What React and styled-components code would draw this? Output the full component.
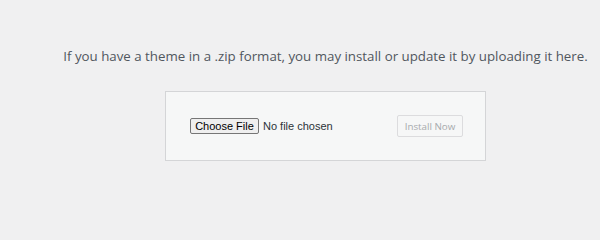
import styled, { createGlobalStyle } from 'styled-components';

const GlobalStyle = createGlobalStyle`
    html, body {
        margin: 0;
        padding: 0;
        background: #f0f0f1;
    }
`

const Page = styled.div`
    height: 223px;
    box-sizing: border-box;
    padding: 46px 0 0 51px;
    display: flex;
    flex-direction: column;
    align-items: center;
    font-family: 'Open Sans', sans-serif;
`

const Help = styled.p`
    margin: 0;
    font-size: 13.3px;
    line-height: 20px;
    color: #50575e;
    text-align: center;
    white-space: nowrap;
`

const UploadForm = styled.form`
    margin-top: 25px;
    width: 321px;
    height: 70px;
    box-sizing: border-box;
    background: #f6f7f7;
    border: 1px solid #d4d5d7;
    display: flex;
    align-items: center;
    justify-content: space-between;
    padding: 0 22px 0 24px;
`

const FilePicker = styled.label`
    display: flex;
    align-items: center;
    gap: 4px;
    font-family: 'Liberation Sans', Arial, sans-serif;
    font-size: 11px;
    cursor: pointer;

    input {
        display: none;
    }
`

const PickButton = styled.span`
    display: inline-flex;
    align-items: center;
    justify-content: center;
    box-sizing: border-box;
    width: 69px;
    height: 16px;
    background: #efefef;
    border: 1px solid #767676;
    border-radius: 2px;
    color: #000;
`

const FileName = styled.span`
    color: #2c3338;
`

const Button = styled.button`
    width: 66px;
    height: 22px;
    padding: 0;
    font-family: 'Open Sans', sans-serif;
    font-size: 9.8px;
    color: #a7aaad;
    background: #f6f7f7;
    border: 1px solid #dcdcde;
    border-radius: 2px;
`

export default function App() {
    return (
        <>
            <GlobalStyle />
            <Page>
                <Help>If you have a theme in a .zip format, you may install or update it by uploading it here.</Help>
                <UploadForm onSubmit={(e) => e.preventDefault()}>
                    <FilePicker>
                        <input type="file" accept=".zip" />
                        <PickButton>Choose File</PickButton>
                        <FileName>No file chosen</FileName>
                    </FilePicker>
                    <Button type="submit" disabled>Install Now</Button>
                </UploadForm>
            </Page>
        </>
    );
}
